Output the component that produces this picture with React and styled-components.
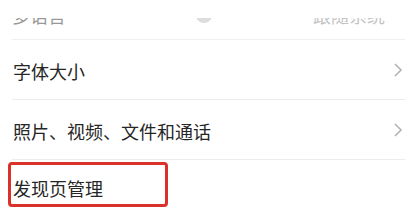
import React from "react";
import styled, { createGlobalStyle } from "styled-components";

const Global = createGlobalStyle`
  html, body { margin: 0; padding: 0; background: #ffffff; }
  body { font-family: "Noto Sans CJK SC", "Noto Sans", sans-serif; }
`;

const List = styled.div`
  display: flex;
  flex-direction: column;
  width: 412px;
  height: 220px;
  overflow: hidden;
  background: #ffffff;
`;

const TopRow = styled.div`
  height: 40px;
  margin: 0 7px 0 12px;
  border-bottom: 1px solid #efefef;
  box-sizing: border-box;
`;

const Clip = styled.div`
  height: 7px;
  margin-top: 18px;
  overflow: hidden;
  opacity: 0.5;
`;

const ClipInner = styled.div`
  display: flex;
  align-items: center;
  justify-content: space-between;
  margin-top: -16px;
  height: 26px;
  font-size: 18px;
  color: #333;
`;

const Blob = styled.span`
  display: inline-block;
  width: 16px;
  height: 16px;
  border-radius: 50%;
  background: #bdbdbd;
  margin-left: 130px;
`;

const Row = styled.div`
  display: flex;
  align-items: ${(p) => (p.$top ? "flex-start" : "center")};
  justify-content: space-between;
  height: 60px;
  margin: 0 7px 0 12px;
  border-bottom: ${(p) => (p.$last ? "none" : "1px solid #ececec")};
  box-sizing: border-box;
`;

const Label = styled.span`
  font-size: 18px;
  color: #262626;
  padding-left: 1px;
  margin-top: 3px;
`;

const Marked = styled.span`
  display: inline-flex;
  align-items: center;
  box-sizing: border-box;
  margin-left: -4px;
  margin-top: 2px;
  width: 160px;
  height: 45px;
  border: 3px solid #d8322b;
  border-radius: 4px;
  font-size: 18px;
  color: #262626;
  padding-left: 2px;
  padding-top: 6px;
`;

const Chevron = () => (
  <svg width="10" height="16" viewBox="0 0 10 16" style={{ marginRight: 2 }}>
    <polyline points="2,2 8,8 2,14" fill="none" stroke="#b4b4b4" strokeWidth="1.6" />
  </svg>
);

export default function App() {
  return (
    <>
      <Global />
      <List>
        <TopRow>
          <Clip>
            <ClipInner>
              <span>多语言<Blob /></span>
              <span style={{ color: "#888", marginRight: 20 }}>跟随系统</span>
            </ClipInner>
          </Clip>
        </TopRow>
        <Row>
          <Label>字体大小</Label>
          <Chevron />
        </Row>
        <Row>
          <Label>照片、视频、文件和通话</Label>
          <Chevron />
        </Row>
        <Row $last $top>
          <Marked>发现页管理</Marked>
        </Row>
      </List>
    </>
  );
}
